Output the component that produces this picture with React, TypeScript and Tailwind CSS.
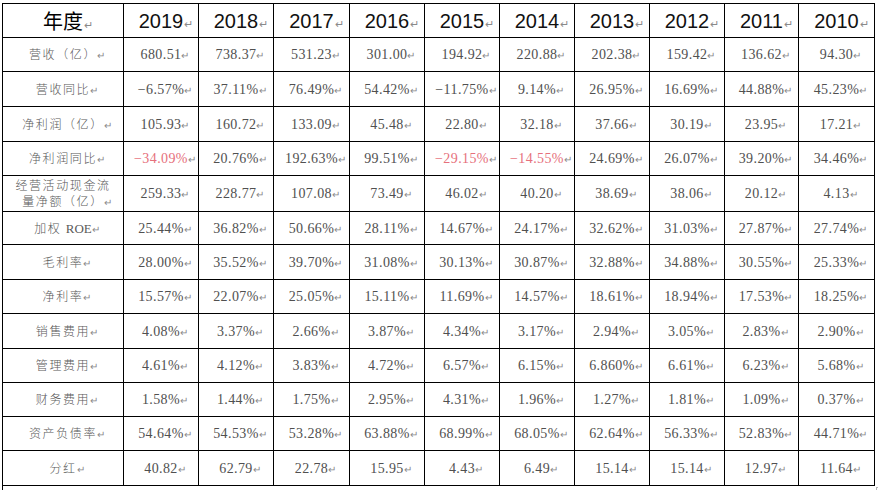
const YEARS = ["2019", "2018", "2017", "2016", "2015", "2014", "2013", "2012", "2011", "2010"];

const COL_W = ["w-[75px]", "w-[75px]", "w-[76px]", "w-[75px]", "w-[75px]", "w-[75px]", "w-[75px]", "w-[75px]", "w-[74px]", "w-[76px]"];

type Row = {
	label: string[];
	values: string[];
	h: string;
	red?: number[];
	latin?: string;
};

const ROWS: Row[] = [
	{ label: ["营收（亿）"], h: "h-[34px]", values: ["680.51", "738.37", "531.23", "301.00", "194.92", "220.88", "202.38", "159.42", "136.62", "94.30"] },
	{ label: ["营收同比"], h: "h-[35px]", values: ["−6.57%", "37.11%", "76.49%", "54.42%", "−11.75%", "9.14%", "26.95%", "16.69%", "44.88%", "45.23%"] },
	{ label: ["净利润（亿）"], h: "h-[35px]", values: ["105.93", "160.72", "133.09", "45.48", "22.80", "32.18", "37.66", "30.19", "23.95", "17.21"] },
	{ label: ["净利润同比"], h: "h-[34px]", red: [0, 4, 5], values: ["−34.09%", "20.76%", "192.63%", "99.51%", "−29.15%", "−14.55%", "24.69%", "26.07%", "39.20%", "34.46%"] },
	{ label: ["经营活动现金流", "量净额（亿）"], h: "h-[36px]", values: ["259.33", "228.77", "107.08", "73.49", "46.02", "40.20", "38.69", "38.06", "20.12", "4.13"] },
	{ label: ["加权 "], latin: "ROE", h: "h-[33px]", values: ["25.44%", "36.82%", "50.66%", "28.11%", "14.67%", "24.17%", "32.62%", "31.03%", "27.87%", "27.74%"] },
	{ label: ["毛利率"], h: "h-[35px]", values: ["28.00%", "35.52%", "39.70%", "31.08%", "30.13%", "30.87%", "32.88%", "34.88%", "30.55%", "25.33%"] },
	{ label: ["净利率"], h: "h-[34px]", values: ["15.57%", "22.07%", "25.05%", "15.11%", "11.69%", "14.57%", "18.61%", "18.94%", "17.53%", "18.25%"] },
	{ label: ["销售费用"], h: "h-[35px]", values: ["4.08%", "3.37%", "2.66%", "3.87%", "4.34%", "3.17%", "2.94%", "3.05%", "2.83%", "2.90%"] },
	{ label: ["管理费用"], h: "h-[34px]", values: ["4.61%", "4.12%", "3.83%", "4.72%", "6.57%", "6.15%", "6.860%", "6.61%", "6.23%", "5.68%"] },
	{ label: ["财务费用"], h: "h-[34px]", values: ["1.58%", "1.44%", "1.75%", "2.95%", "4.31%", "1.96%", "1.27%", "1.81%", "1.09%", "0.37%"] },
	{ label: ["资产负债率"], h: "h-[34px]", values: ["54.64%", "54.53%", "53.28%", "63.88%", "68.99%", "68.05%", "62.64%", "56.33%", "52.83%", "44.71%"] },
	{ label: ["分红"], h: "h-[35px]", values: ["40.82", "62.79", "22.78", "15.95", "4.43", "6.49", "15.14", "15.14", "12.97", "11.64"] },
];

// Word's paragraph mark, kept out of the centring
function Mark ({ big }: { big?: boolean }) {
	return (
		<span className="inline-block w-0 overflow-visible whitespace-nowrap align-baseline tracking-normal">
			<span className={big ? "ml-[1px] text-[11px] font-normal text-[#8a8a8a]" : "text-[10px] text-[#8a8a8a]"}>↵</span>
		</span>
	);
}

function RowEnd () {
	return (
		<div className="flex w-[4px] items-center justify-end">
			<span className="mt-[6px] h-[3px] w-[1px] bg-[#b5b5b5]" />
		</div>
	);
}

export default function App () {
	return (
		<div className="h-[490px] w-[878px] bg-white pl-[2px] pt-[3px]">
			<div className="flex">
				<div className="flex flex-col border-l border-t border-black">
					<div className="flex h-[34px]">
						<div className="flex w-[121px] items-center justify-center border-b border-r border-black font-['Noto_Sans_CJK_SC',sans-serif] text-[20px] font-normal text-black">
							<span>年度<Mark big /></span>
						</div>
						{YEARS.map((year, i) => (
							<div
								key={year}
								className={`${COL_W[i]} flex items-center justify-center border-b border-r border-black font-['Liberation_Sans',Arial,sans-serif] text-[20px] font-normal text-[#111]`}
							>
								<span>{year}<Mark big /></span>
							</div>
						))}
					</div>

					{ROWS.map((row) => (
						<div key={row.label.join("")} className={`flex ${row.h}`}>
							<div className="flex w-[121px] flex-col items-center justify-center border-b border-r border-black font-['Noto_Sans_CJK_SC',sans-serif] text-[12px] leading-[16px] font-light tracking-[1.6px] text-[#595959]">
								{row.label.map((line, k) => (
									<span key={line}>
										{line}
										{row.latin && (
											<span className="font-['Liberation_Serif',serif] text-[13px] tracking-normal">{row.latin}</span>
										)}
										{k === row.label.length - 1 && <Mark />}
									</span>
								))}
							</div>
							{row.values.map((value, i) => (
								<div
									key={i}
									className={`${COL_W[i]} flex items-center justify-center border-b border-r border-black font-['Liberation_Serif',serif] text-[14px] tracking-[0.4px] ${row.red?.includes(i) ? "text-[#e6707c]" : "text-[#505050]"}`}
								>
									<span>{value}<Mark /></span>
								</div>
							))}
						</div>
					))}
				</div>

				<div className="flex flex-col pt-[1px]">
					<div className="h-[34px]">
						<RowEnd />
					</div>
					{ROWS.map((row) => (
						<div key={row.label.join("")} className={`${row.h} flex`}>
							<RowEnd />
						</div>
					))}
					<div className="ml-[1px] mt-[1px] h-[4px] w-[3px] border-l border-t border-[#b5b5b5]" />
				</div>
			</div>
		</div>
	);
}
